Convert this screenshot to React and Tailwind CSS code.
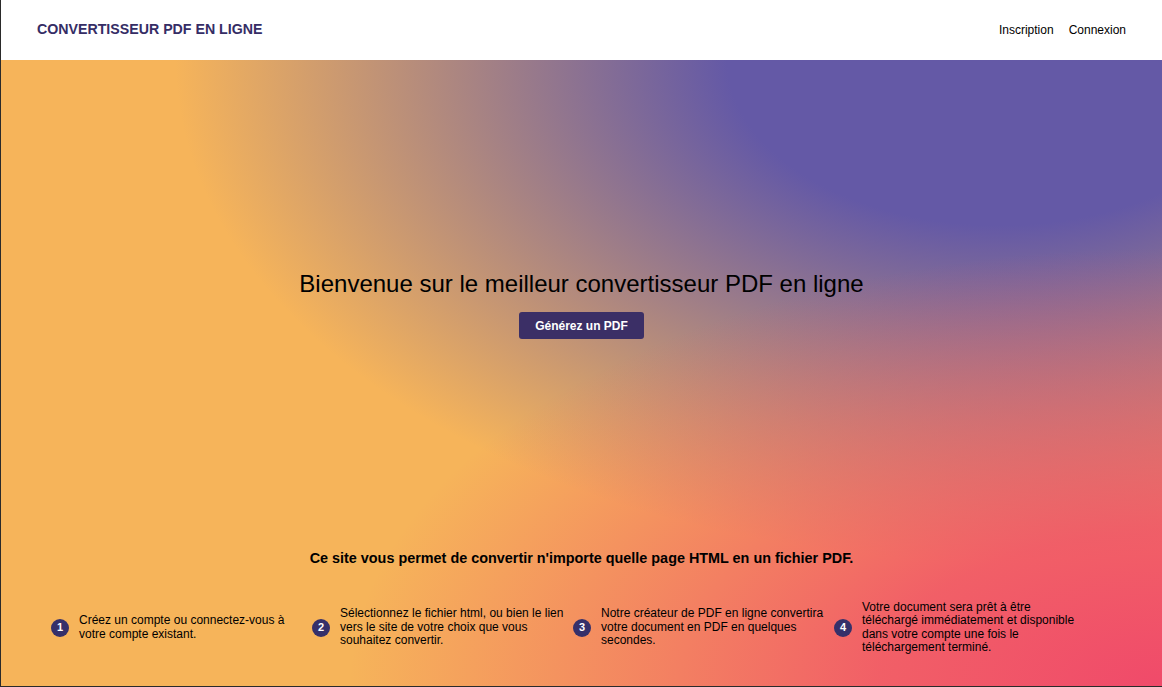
import React from 'react';

const steps = [
  "Créez un compte ou connectez-vous à votre compte existant.",
  "Sélectionnez le fichier html, ou bien le lien vers le site de votre choix que vous souhaitez convertir.",
  "Notre créateur de PDF en ligne convertira votre document en PDF en quelques secondes.",
  "Votre document sera prêt à être téléchargé immédiatement et disponible dans votre compte une fois le téléchargement terminé.",
];

function Step({ n, text }) {
  return (
    <div className="w-[261px] flex items-center gap-[10px]">
      <span className="w-[18px] h-[18px] rounded-full bg-[#35306a] text-white text-[11px] font-bold flex items-center justify-center flex-shrink-0">
        {n}
      </span>
      <p className="w-[224px] text-[12px] leading-[13.5px] text-black">{text}</p>
    </div>
  );
}

export default function App() {
  return (
    <div className="w-[1162px] h-[687px] flex flex-col font-['Liberation_Sans',Arial,sans-serif] border-l border-b border-[#2a2a2a] overflow-hidden">
      <header className="h-[60px] bg-white flex items-center justify-between pl-[36px] pr-[36px] flex-shrink-0">
        <h1 className="text-[14.2px] font-bold text-[#352d65]">CONVERTISSEUR PDF EN LIGNE</h1>
        <nav className="flex items-center gap-[15px] text-[12px] text-black">
          <a href="#">Inscription</a>
          <a href="#">Connexion</a>
        </nav>
      </header>

      <main className="flex-1 flex flex-col items-center bg-[#f6b45a] bg-[radial-gradient(ellipse_70%_70%_at_100%_100%,#f04a6a_0%,rgba(240,74,106,0.8)_35%,rgba(240,74,106,0)_100%),radial-gradient(ellipse_71%_80%_at_86%_0%,#6459a6_0%,#6459a6_33%,rgba(100,89,166,0)_100%)]">
        <h2 className="mt-[210px] text-[24px] leading-[28px] text-black">
          Bienvenue sur le meilleur convertisseur PDF en ligne
        </h2>
        <button className="mt-[14px] h-[27px] px-[16px] rounded-[3px] bg-[#3b2f66] text-white text-[12px] font-bold">
          Générez un PDF
        </button>

        <p className="mt-[209px] text-[14.4px] font-bold text-black">
          Ce site vous permet de convertir n'importe quelle page HTML en un fichier PDF.
        </p>

        <div className="mt-[31px] w-full flex pl-[50px]">
          {steps.map((s, i) => (
            <Step key={i} n={i + 1} text={s} />
          ))}
        </div>
      </main>
    </div>
  );
}
